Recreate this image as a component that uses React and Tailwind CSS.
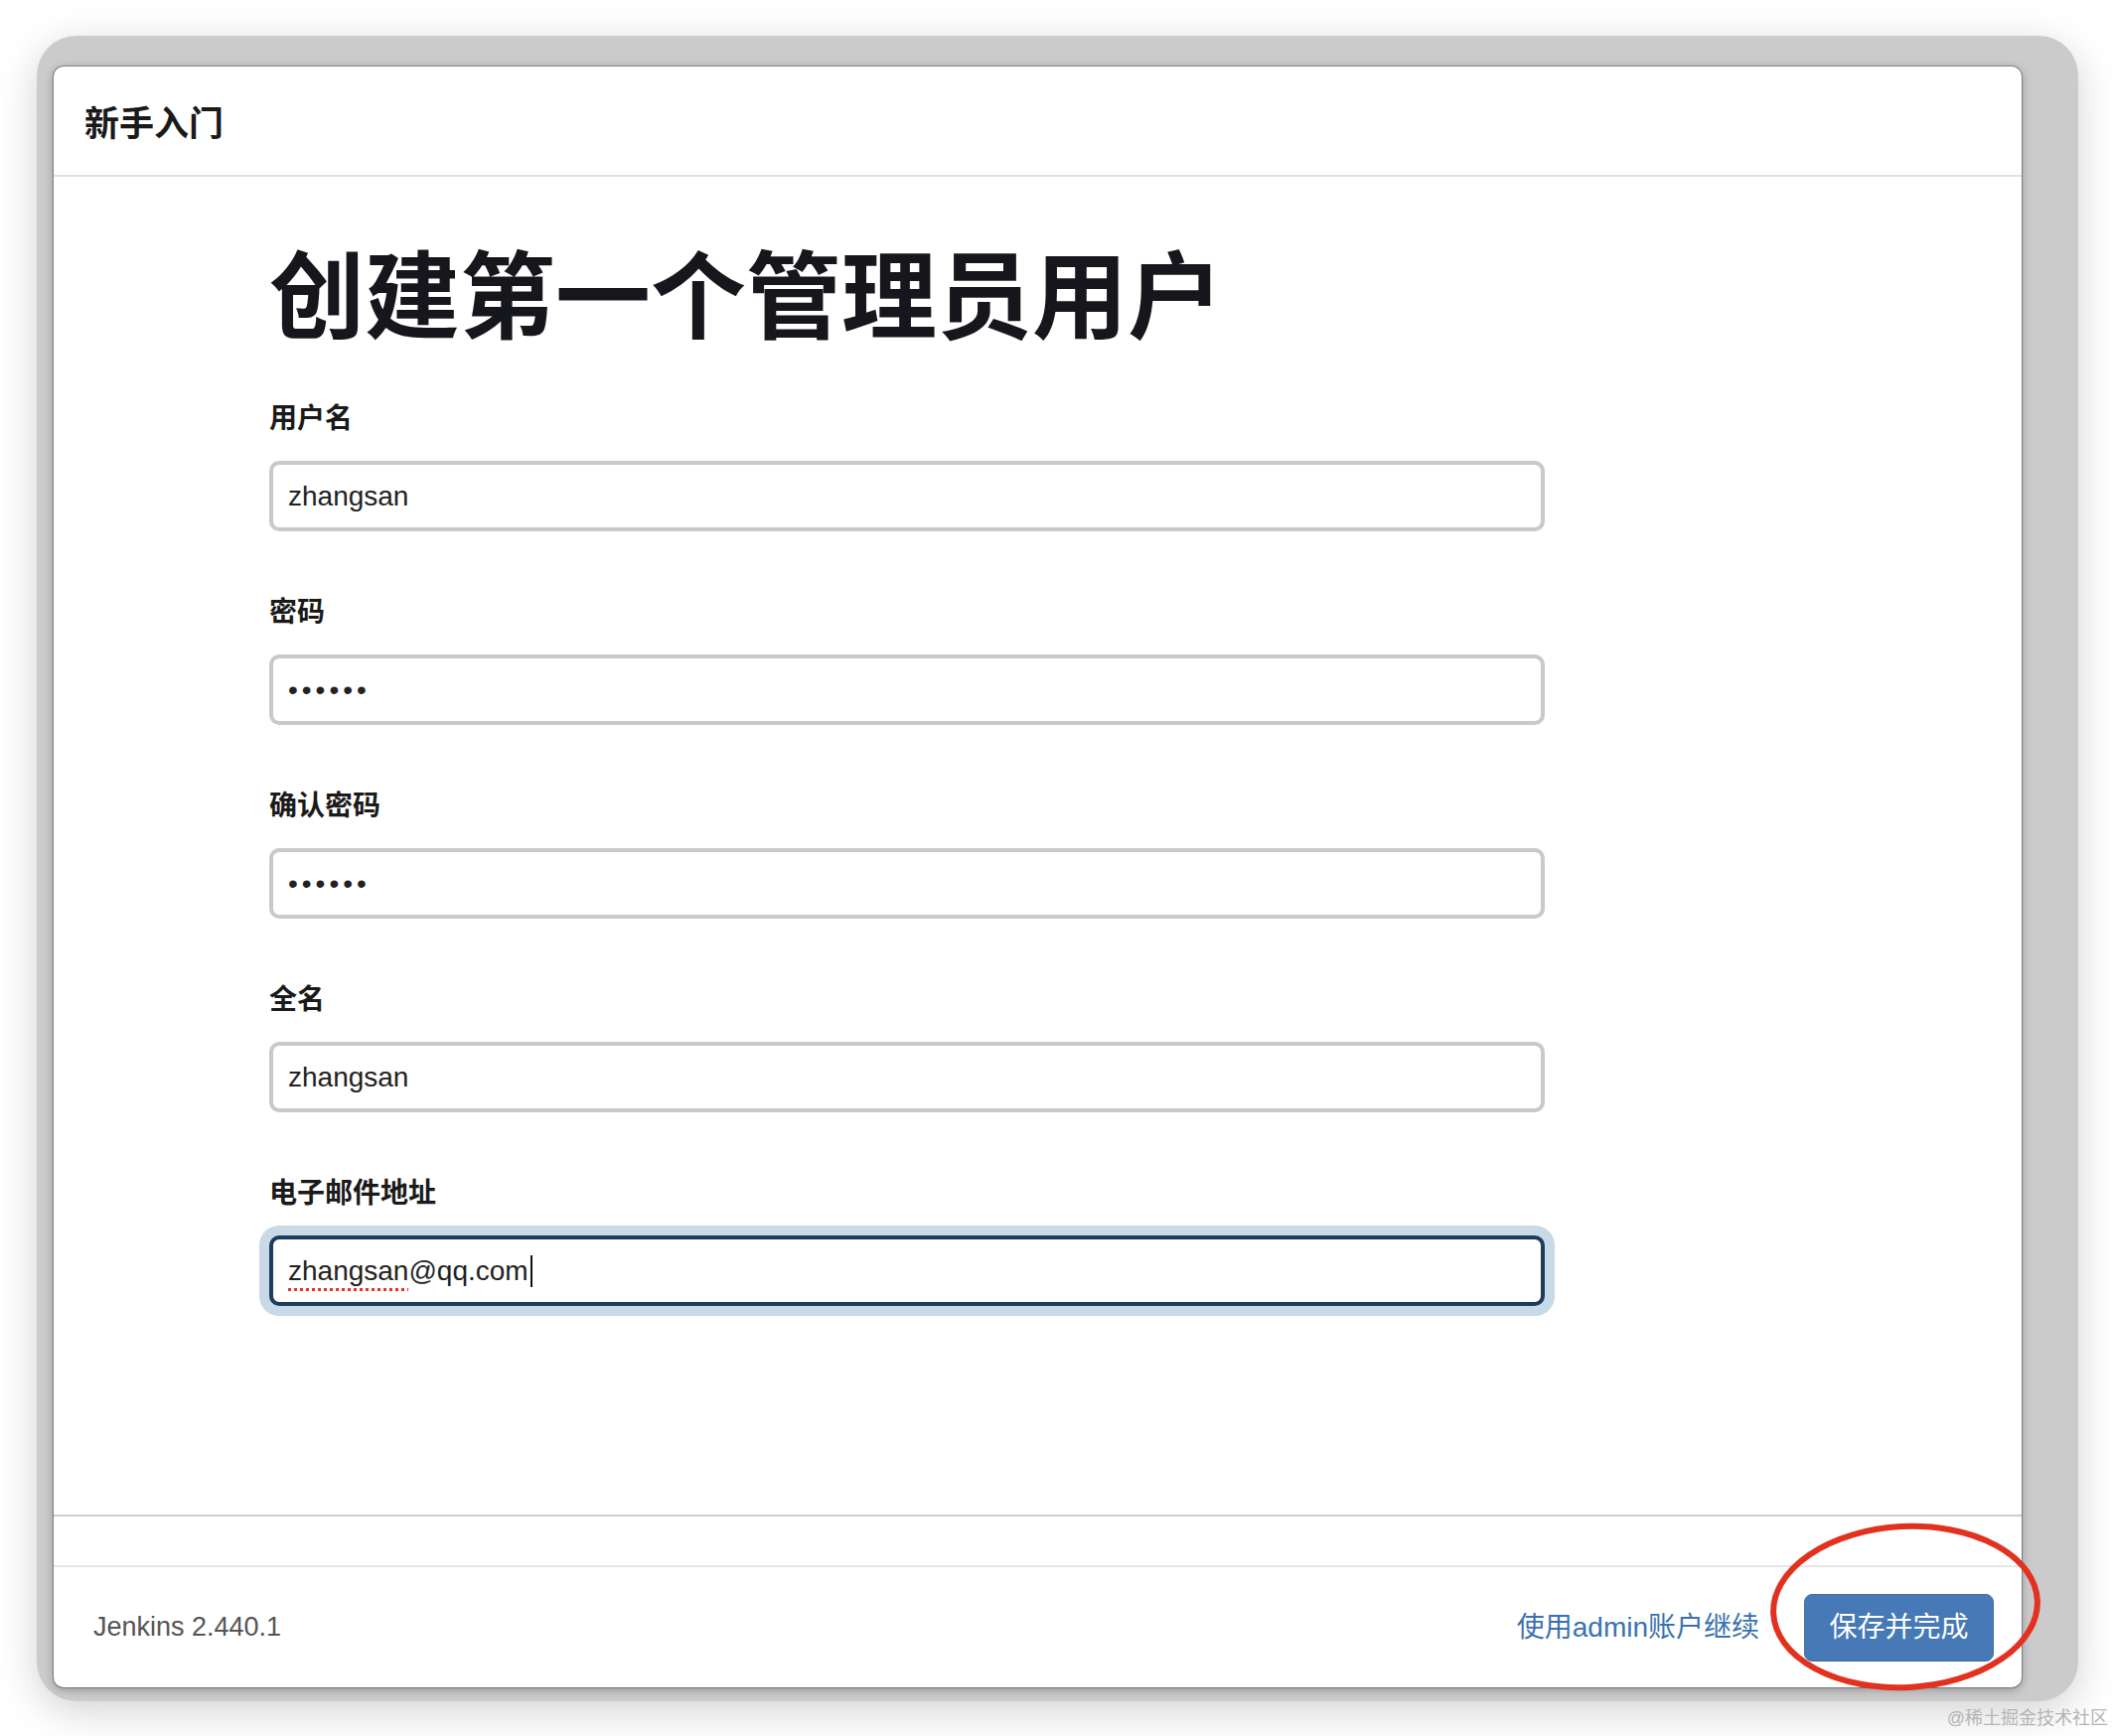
const fieldBox = 'block w-[1284px] h-[71px] rounded-[10px] border-4 bg-white pl-[15px] text-[28px] text-[#222] outline-none';

const Field = ({ label, first, children }) => (
    <div>
        <div className={`${first ? 'mt-[60px]' : 'mt-[68px]'} text-[28px] leading-[28px] font-bold text-[#1a1a1a]`}>{label}</div>
        <div className="mt-[28px]">{children}</div>
    </div>
);

export default function App() {
    return (
        <div className="relative w-[2128px] h-[1748px] bg-white pt-[36px] pl-[37px] font-['Liberation_Sans','Noto_Sans_CJK_SC',sans-serif]">
            {/* dimmed backdrop around the wizard */}
            <div className="w-[2055px] h-[1677px] flex rounded-[40px] bg-[#cbcbcb] pl-[17px] pt-[31px] pr-[57px] pb-[14px] shadow-[0_10px_40px_rgba(0,0,0,0.18)]">
                <div className="flex-1 flex flex-col bg-white rounded-[10px] overflow-hidden shadow-[0_0_0_1px_rgba(0,0,0,0.28),0_2px_10px_rgba(0,0,0,0.3)]">
                    <div className="h-[111px] flex-none flex items-center pl-[31px] pt-[8px] border-b-2 border-[#e2e2e2]">
                        <span className="text-[35px] font-semibold text-[#1a1a1a]">新手入门</span>
                    </div>

                    <div className="flex-1 min-h-0 pl-[217px] pt-[74px]">
                        <h1 className="text-[96px] leading-[96px] font-bold text-[#16161d]">创建第一个管理员用户</h1>

                        <Field label="用户名" first>
                            <input readOnly value="zhangsan" className={`${fieldBox} border-[#c8c9cb]`} />
                        </Field>
                        <Field label="密码">
                            <input readOnly type="password" value="123456" className={`${fieldBox} border-[#c8c9cb] tracking-[4px]`} />
                        </Field>
                        <Field label="确认密码">
                            <input readOnly type="password" value="123456" className={`${fieldBox} border-[#c8c9cb] tracking-[4px]`} />
                        </Field>
                        <Field label="全名">
                            <input readOnly value="zhangsan" className={`${fieldBox} border-[#c8c9cb]`} />
                        </Field>
                        <Field label="电子邮件地址">
                            <div className={`${fieldBox} flex items-center border-[#1d3d5b] shadow-[0_0_0_10px_#c8d9e7]`}>
                                <span className="underline decoration-dotted decoration-[#e0342a] decoration-[3px] underline-offset-[8px]">zhangsan</span>
                                <span>@qq.com</span>
                                <span className="ml-[2px] w-[2px] h-[32px] bg-[#111]"></span>
                            </div>
                        </Field>
                    </div>

                    <div className="h-[51px] flex-none border-t-2 border-[#cdcdcd]"></div>
                    <div className="h-[123px] flex-none border-t-2 border-[#e6e6e6] flex items-center justify-between pl-[40px] pr-[28px]">
                        <span className="text-[27px] text-[#555]">Jenkins 2.440.1</span>
                        <div className="flex items-center gap-[45px]">
                            <a className="text-[28px] text-[#3a72b0]">使用admin账户继续</a>
                            <button className="w-[191px] h-[68px] rounded-[8px] bg-[#4679b5] border border-[#3f6ea8] text-white text-[28px]">保存并完成</button>
                        </div>
                    </div>
                </div>
            </div>

            {/* red annotation circle */}
            <svg className="absolute left-[1778px] top-[1530px]" width="280" height="176" viewBox="0 0 280 176">
                <ellipse cx="140" cy="88" rx="133" ry="81" fill="none" stroke="#e2311f" strokeWidth="6" transform="rotate(-3 140 88)" />
            </svg>

            <span className="absolute right-[6px] bottom-[4px] text-[18px] text-[#b4b4b4]">@稀土掘金技术社区</span>
        </div>
    );
}
